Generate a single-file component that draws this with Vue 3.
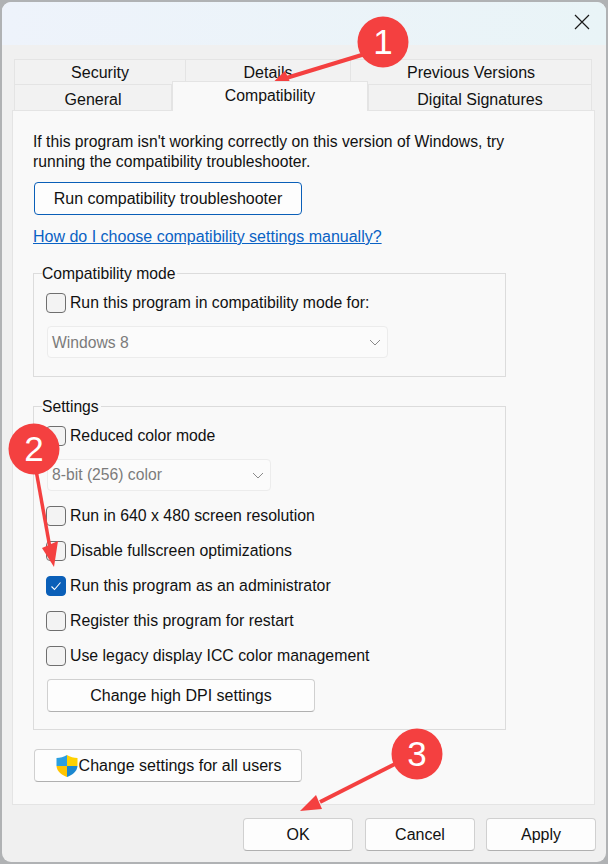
<script setup>
const settingsTop = [
  { label: 'Run in 640 x 480 screen resolution', checked: false },
  { label: 'Disable fullscreen optimizations', checked: false },
  { label: 'Run this program as an administrator', checked: true },
  { label: 'Register this program for restart', checked: false },
  { label: 'Use legacy display ICC color management', checked: false },
]
</script>

<template>
  <div class="screen">
    <div class="dialog">
      <div class="titlebar">
        <svg class="close" width="16" height="16" viewBox="0 0 16 16"><path d="M1 1 L15 15 M15 1 L1 15" stroke="#1a1a1a" stroke-width="1.2" fill="none" /></svg>
      </div>
      <div class="body">
        <div class="tabs">
          <div class="tabrow back">
            <div class="tab t-sec">Security</div>
            <div class="tab t-det">Details</div>
            <div class="tab t-prev">Previous Versions</div>
          </div>
          <div class="tabrow front">
            <div class="tab t-gen">General</div>
            <div class="tab t-comp">Compatibility</div>
            <div class="tab t-dig">Digital Signatures</div>
          </div>
        </div>
        <div class="panel">
          <p class="intro">If this program isn't working correctly on this version of Windows, try<br />running the compatibility troubleshooter.</p>
          <div class="btn wide troubleshoot">Run compatibility troubleshooter</div>
          <a class="link">How do I choose compatibility settings manually?</a>

          <div class="group compat">
            <span class="legend">Compatibility mode</span>
            <div class="check-row first">
              <span class="box"></span><span>Run this program in compatibility mode for:</span>
            </div>
            <div class="select win">
              <span>Windows 8</span>
              <svg width="12" height="7" viewBox="0 0 12 7"><path d="M1 1 L6 6 L11 1" stroke="#8a8a8a" stroke-width="1" fill="none" /></svg>
            </div>
          </div>

          <div class="group settings">
            <span class="legend">Settings</span>
            <div class="check-row first">
              <span class="box"></span><span>Reduced color mode</span>
            </div>
            <div class="select color">
              <span>8-bit (256) color</span>
              <svg width="12" height="7" viewBox="0 0 12 7"><path d="M1 1 L6 6 L11 1" stroke="#8a8a8a" stroke-width="1" fill="none" /></svg>
            </div>
            <div class="check-list">
              <div v-for="item in settingsTop" :key="item.label" class="check-row">
                <span class="box" :class="{ on: item.checked }">
                  <svg v-if="item.checked" width="12" height="10" viewBox="0 0 12 10"><path d="M1.5 5.5 L4.5 8.5 L10.500 1.500" stroke="#fff" stroke-width="1.1" fill="none" /></svg>
                </span>
                <span>{{ item.label }}</span>
              </div>
            </div>
            <div class="btn wide hidpi">Change high DPI settings</div>
          </div>

          <div class="btn wide allusers">
            <svg class="shield" width="24" height="24" viewBox="0 0 24 24">
              <path d="M12 1 C9 3 5 4 1.500 4 L1.500 12 L12 12 Z" fill="#2b9fe0" />
              <path d="M12 1 C15 3 19 4 22.500 4 L22.500 12 L12 12 Z" fill="#ffd100" />
              <path d="M1.500 12 C2 18 7 21 12 23 L12 12 Z" fill="#ffc400" />
              <path d="M22.500 12 C22 18 17 21 12 23 L12 12 Z" fill="#1b87cf" />
            </svg>
            <span>Change settings for all users</span>
          </div>
        </div>
        <div class="footer">
          <div class="btn foot">OK</div>
          <div class="btn foot">Cancel</div>
          <div class="btn foot">Apply</div>
        </div>
      </div>
    </div>

    <svg class="marks" width="608" height="864" viewBox="0 0 608 864">
      <g fill="#f44040" stroke="#f44040">
        <path d="M365 54 L283 79" stroke-width="4" fill="none" />
        <path d="M267 88 L285 71 L291 84 Z" stroke="none" />
        <path d="M36 470 L50 548" stroke-width="3.500" fill="none" />
        <path d="M54 567 L42 548 L58 541 Z" stroke="none" />
        <path d="M395 764 L320 802" stroke-width="4" fill="none" />
        <path d="M300 811 L316 795 L322 809 Z" stroke="none" />
      </g>
      <g fill="#f44040">
        <circle cx="383" cy="42" r="25.500" />
        <circle cx="34" cy="449" r="25.500" />
        <circle cx="417" cy="754" r="25.500" />
      </g>
    </svg>
    <div class="num n1">1</div>
    <div class="num n2">2</div>
    <div class="num n3">3</div>
  </div>
</template>

<style>
html, body { margin: 0; background: #b0b2b4; }
</style>

<style scoped>
.screen {
  position: relative;
  width: 608px;
  height: 864px;
  overflow: hidden;
  background: #b0b2b4;
  padding: 2px 2px 2px 2px;
  box-sizing: border-box;
  font-family: "Liberation Sans", Arial, sans-serif;
  font-size: 16px;
  color: #111;
}
.dialog {
  height: 100%;
  border-radius: 9px;
  overflow: hidden;
  display: flex;
  flex-direction: column;
  background: #f0f0f0;
}
.titlebar {
  height: 43px;
  flex: none;
  display: flex;
  justify-content: flex-end;
  align-items: flex-start;
  padding: 12px 16px 0 0;
  box-sizing: border-box;
  background: linear-gradient(90deg, #eef3fb, #e9f4f7);
}
.body {
  flex: 1;
  display: flex;
  flex-direction: column;
  padding: 14px 10px 0 10px;
  min-height: 0;
}
.tabs { display: flex; flex-direction: column; padding-left: 2px; height: 51px; flex: none; }
.tabrow { display: flex; height: 26px; flex: none; }
.tab {
  box-sizing: border-box;
  border: 1px solid #e4e4e4;
  border-bottom: 0;
  background: #f2f2f2;
  text-align: center;
  line-height: 26px;
}
.back .tab { height: 26px; margin-left: -1px; }
.t-sec { width: 172px; margin-left: 0 !important; }
.t-det { width: 166px; }
.t-prev { width: 242px; }
.front { margin-top: -1px; position: relative; }
.front .tab { height: 26px; line-height: 29px; }
.t-gen { width: 158px; }
.t-comp {
  width: 196px;
  height: 30px !important;
  margin-top: -3px;
  background: #f9f9f9;
  line-height: 28px !important;
  position: relative;
  z-index: 1;
  font-size: 15.8px;
}
.t-dig { width: 224px; }
.panel {
  flex: none;
  height: 695px;
  box-sizing: border-box;
  background: #f9f9f9;
  border: 1px solid #e4e4e4;
  width: 583px;
  padding: 21px 0 0 20px;
  display: flex;
  flex-direction: column;
  align-items: flex-start;
  position: relative;
}
.intro { margin: 0; line-height: 20px; font-size: 15.7px; }
.btn {
  box-sizing: border-box;
  background: #fdfdfd;
  border: 1px solid #d0d0d0;
  border-bottom-color: #b0b0b0;
  border-radius: 4px;
  display: flex;
  align-items: center;
  justify-content: center;
  flex: none;
}
.wide { width: 268px; height: 33px; }
.troubleshoot { margin: 10px 0 0 1px; border-color: #0a5fb8; }
.link {
  margin-top: 12px;
  color: #0a62c4;
  text-decoration: underline;
  line-height: 20px;
}
.group {
  width: 473px;
  box-sizing: border-box;
  border: 1px solid #dcdcdc;
  position: relative;
  flex: none;
}
.legend {
  position: absolute;
  left: 8px;
  top: -10px;
  background: #f9f9f9;
  line-height: 20px;
  padding-right: 2px;
  font-size: 15.7px;
}
.compat { height: 104px; margin-top: 26px; padding: 19px 0 0 12px; }
.settings { height: 324px; margin-top: 29px; padding: 19px 0 0 12px; }
.check-row { display: flex; align-items: center; height: 35px; gap: 4px; font-size: 15.85px; }
.check-row.first { height: 20px; font-size: 15.75px; }
.box {
  box-sizing: border-box;
  width: 20px;
  height: 20px;
  flex: none;
  border: 1px solid #6f6f6f;
  border-radius: 4px;
  background: #f3f3f3;
  display: flex;
  align-items: center;
  justify-content: center;
}
.box.on { background: #0a5fb8; border-color: #0a5fb8; }
.select {
  box-sizing: border-box;
  height: 32px;
  margin-left: 1px;
  background: #fbfbfb;
  border: 1px solid #ececec;
  border-radius: 4px;
  color: #7b7b7b;
  display: flex;
  align-items: center;
  justify-content: space-between;
  padding: 1px 6px 0 4px;
  font-size: 15.7px;
}
.win { width: 341px; margin-top: 13px; }
.color { width: 224px; margin-top: 13px; padding-top: 0; }
.check-list { margin-top: 7px; }
.hidpi { margin: 6px 0 0 1px; }
.allusers { margin: 19px 0 0 1px; }
.footer {
  display: flex;
  justify-content: flex-end;
  gap: 11px;
  margin-top: 13px;
}
.foot { width: 110px; height: 33px; }
.foot:nth-child(2) { margin-left: 1px; }
.close { display: block; }
.marks { position: absolute; left: 0; top: 0; pointer-events: none; }
.num {
  position: absolute;
  width: 50px;
  height: 50px;
  line-height: 50px;
  text-align: center;
  color: #fff;
  font-size: 35px;
}
.n1 { left: 358px; top: 17px; }
.n2 { left: 9px; top: 424px; }
.n3 { left: 392px; top: 729px; }
</style>
